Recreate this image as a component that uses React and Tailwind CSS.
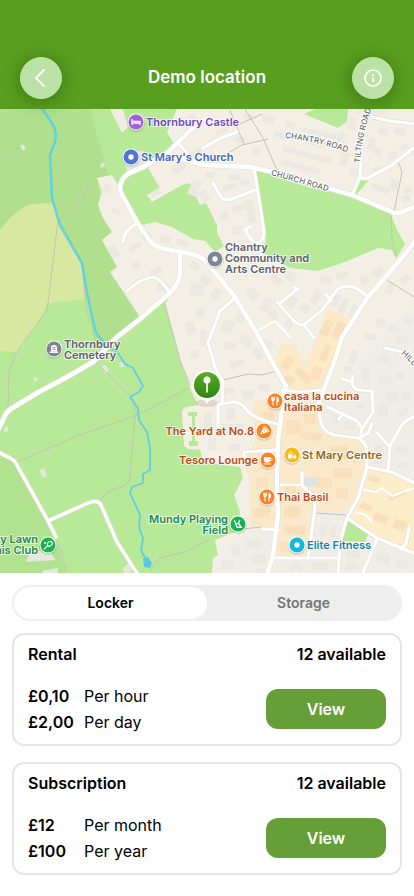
import { useState } from 'react';

const OFFERS = {
  locker: [
    {
      name: 'Rental',
      available: 12,
      prices: [
        { amount: '£0,10', period: 'Per hour' },
        { amount: '£2,00', period: 'Per day' },
      ],
    },
    {
      name: 'Subscription',
      available: 12,
      prices: [
        { amount: '£12', period: 'Per month' },
        { amount: '£100', period: 'Per year' },
      ],
    },
  ],
  storage: [
    {
      name: 'Rental',
      available: 4,
      prices: [{ amount: '£5,00', period: 'Per day' }],
    },
  ],
};

const TABS = [
  { id: 'locker', label: 'Locker' },
  { id: 'storage', label: 'Storage' },
];

// x, y, width, height, rotation
const BUILDINGS = [
  [104, 184, 7, 9, 10], [112, 208, 9, 6, 20], [110, 245, 8, 13, -30], [128, 244, 14, 6, -30],
  [142, 232, 9, 9, 30], [160, 236, 10, 7, 10], [176, 240, 12, 6, 20], [150, 268, 12, 6, -25],
  [132, 262, 8, 7, -30], [157, 284, 12, 8, 10], [172, 164, 14, 8, -25], [190, 150, 12, 7, -30],
  [190, 180, 9, 16, 25], [200, 190, 8, 12, -30], [151, 190, 10, 6, -30], [206, 172, 9, 6, 10],
  [186, 115, 10, 8, -25], [215, 128, 12, 6, -25], [235, 136, 10, 7, 15], [252, 148, 9, 7, 15],
  [244, 114, 9, 6, 20], [262, 116, 12, 7, 15], [285, 122, 10, 6, 15], [274, 132, 12, 6, 15],
  [287, 138, 44, 6, 15], [282, 152, 50, 6, 15], [280, 164, 40, 6, 15], [302, 131, 36, 5, 12],
  [334, 136, 14, 7, -70], [348, 118, 8, 12, 10], [340, 152, 8, 14, 15], [350, 168, 8, 8, 15],
  [368, 138, 7, 12, 15], [378, 128, 10, 7, 10], [394, 128, 12, 7, 10], [374, 148, 8, 7, 15],
  [372, 166, 10, 7, -30], [388, 152, 9, 7, -30], [400, 144, 8, 6, -30], [372, 186, 18, 6, 20],
  [390, 178, 8, 12, 10], [404, 186, 8, 8, 10], [402, 196, 8, 6, -20], [228, 174, 12, 6, 5],
  [222, 184, 14, 6, -20], [240, 180, 9, 6, 10], [232, 204, 16, 7, -20], [220, 212, 9, 8, -40],
  [246, 200, 8, 14, -10], [232, 226, 9, 9, 10], [248, 214, 8, 9, 10], [240, 240, 9, 6, 10],
  [190, 262, 10, 8, 30], [200, 275, 10, 10, 30], [190, 284, 14, 12, 10], [196, 308, 9, 9, 0],
  [212, 288, 8, 12, 40], [186, 322, 9, 12, -10], [200, 330, 6, 16, 0], [190, 350, 8, 8, 0],
  [222, 320, 12, 12, 15], [236, 314, 8, 9, 30], [224, 342, 12, 8, 0], [240, 336, 12, 10, 30],
  [230, 360, 14, 7, -10], [252, 350, 12, 8, 50], [262, 340, 10, 12, 30], [248, 288, 9, 12, -30],
  [262, 298, 10, 14, 30], [270, 276, 12, 8, 40], [286, 272, 10, 9, 40], [288, 296, 8, 12, 40],
  [300, 304, 10, 8, 40], [312, 290, 8, 14, 30], [320, 276, 12, 8, 10], [336, 272, 12, 7, -10],
  [340, 298, 7, 16, 25], [350, 304, 7, 14, 25], [333, 294, 6, 14, 25], [284, 320, 9, 8, 40],
  [270, 310, 8, 10, -30], [372, 268, 12, 8, -50], [360, 276, 9, 8, -30], [386, 282, 8, 12, 30],
  [400, 276, 10, 7, -50], [376, 318, 10, 9, -20], [388, 326, 12, 7, 30], [404, 318, 9, 7, 20],
  [364, 334, 12, 6, 0], [350, 350, 7, 14, 20], [378, 356, 12, 7, 10], [396, 336, 12, 7, 10],
  [344, 366, 8, 7, 0], [362, 368, 8, 14, 0], [378, 376, 14, 8, 10], [396, 372, 8, 7, 0],
  [386, 392, 12, 10, 0], [402, 392, 9, 8, 0], [378, 404, 10, 12, 0], [398, 408, 10, 7, -30],
  [346, 396, 8, 7, 20], [330, 414, 9, 9, 20], [344, 422, 12, 8, 10], [356, 402, 8, 7, 20],
  [204, 412, 8, 18, 0], [226, 408, 9, 12, 0], [222, 424, 12, 9, 0], [236, 424, 8, 8, 0],
  [222, 388, 12, 6, 0], [242, 390, 12, 9, 0], [258, 384, 12, 7, 10], [208, 438, 8, 12, 0],
  [228, 444, 12, 7, 0], [374, 444, 8, 12, 10], [396, 446, 12, 8, 20], [398, 462, 10, 7, 10],
  [374, 456, 9, 8, 10], [246, 540, 16, 8, 0], [252, 554, 14, 9, 0], [232, 545, 8, 10, 0],
  [222, 560, 12, 9, 0], [256, 568, 9, 5, 0], [320, 522, 7, 14, 10], [330, 525, 6, 12, 10],
  [322, 542, 12, 8, 0], [312, 562, 16, 8, 0], [290, 563, 12, 8, 0], [346, 548, 14, 10, 0],
  [346, 562, 10, 8, 0], [376, 554, 14, 9, 20], [396, 560, 12, 8, 20],
];

const SHOPS = [
  [322, 320, 9, 16, 25], [334, 322, 9, 18, 25], [322, 344, 7, 18, 20], [284, 356, 8, 14, 30],
  [294, 372, 18, 8, 40], [312, 366, 9, 14, 20], [284, 376, 10, 8, 40], [262, 412, 12, 10, 0],
  [286, 420, 14, 14, 0], [304, 414, 12, 10, 0], [300, 432, 22, 8, 10], [330, 446, 18, 14, 0],
  [334, 468, 18, 10, 0], [256, 478, 12, 10, 0], [254, 508, 16, 9, 0], [284, 486, 12, 8, 0],
  [284, 506, 16, 12, 0], [284, 526, 14, 8, 0], [318, 478, 14, 10, 0], [336, 488, 12, 10, 0],
  [298, 525, 8, 10, 0], [280, 542, 8, 10, 0], [368, 476, 12, 6, 15], [394, 520, 12, 10, 20],
  [374, 514, 14, 9, 20], [388, 492, 18, 6, -20], [360, 504, 12, 6, 25],
];

const WIDE_ROADS = [
  'M-4 434 L3 420 Q6 411 14 407 L37 393 L67 377 L93 362 L117 337 L140 319 L170 293 Q180 283 180 272 V254',
  'M195 126 L167 153 L143 167 L129 173 Q119 180 120 191 L137 222 L150 241 Q156 248 170 250 L192 254 Q204 257 210 266 L235 297 L255 330 L275 367 L286 386',
  'M286 386 Q282 394 282 410 L278 440 L277 482 L278 515 L273 555 L267 575',
  'M416 240 L402 258 L368 297 L342 337 L335 360 L327 381 L319 402',
  'M167 155 L205 165 L250 167 L273 172 L352 195 L390 211 Q396 215 402 212 L416 206',
];

const ROADS = [
  'M-2 452 L10 458 Q15 460 18 467 L48 521 L56 537',
  'M48 521 L88 503 Q98 499 101 505 L117 542 L138 575',
  'M282 390 L300 392 L320 390',
  'M320 400 V418 Q321 431 334 435 L358 438 Q367 443 367 452 V467 L358 498 L347 518 L340 542 L338 575',
  'M367 467 L392 472 L416 484',
  'M347 518 L377 538 L416 554',
  'M254 168 L260 205 L264 232 Q264 240 258 243 Q251 243 245 229 L251 227',
  'M213 183 L221 197 Q225 201 232 199 L255 190',
  'M362 138 L360 177 L352 195',
  'M360 178 H368 L392 165 L416 146',
  'M372 117 L390 121 L416 124',
  'M203 148 L219 139 L237 132',
  'M178 143 L187 153',
  'M136 224 Q124 230 123 242',
  'M127 291 Q140 279 153 277 Q160 278 170 293',
  'M235 298 L220 311 L208 343 L215 367 L223 382 L222 403',
  'M218 428 V405 L232 402 Q240 401 246 409 Q253 419 278 424',
  'M244 463 V452 L277 450',
  'M277 302 L295 322 Q300 326 305 324 L322 310 L337 290 Q346 283 358 289 L368 297',
  'M280 303 L298 289 L294 287',
  'M304 325 L314 338',
  'M326 294 L331 301',
  'M343 379 L352 382 L353 376 M352 382 Q353 390 360 390 L372 391 L373 412 L362 429 L360 438',
  'M327 407 L343 414 L357 421 L362 428 M343 414 L339 419',
  'M385 348 L403 352',
  'M377 433 L390 447 L388 470 M416 416 Q403 421 400 428 L390 446',
  'M372 424 L368 433 L360 438',
  'M302 472 V485 L313 496 Q316 502 314 515 L308 558',
  'M272 558 H338',
  'M377 539 L362 575',
  'M262 529 L278 530',
  'M409 528 L406 544 L401 549',
];

const ALLEYS = [
  'M257 331 L275 321 L290 337',
  'M364 490 L376 492 L382 488 L392 496 L402 492 L414 488',
  'M355 512 L366 515 L371 521',
  'M280 485 L302 485',
];

const PATHS = [
  'M0 155 H25', 'M89 181 Q88 195 79 204 Q70 212 58 220 L53 262 L47 311 L24 341 Q12 358 9 372 L8 408',
  'M60 225 L82 264 L85 296 L89 322', 'M97 363 L132 398 L137 415 L187 389', 'M17 462 L80 435 L137 415',
  'M135 415 L130 476 Q129 485 121 487 Q106 490 100 501', 'M56 537 L67 573',
  'M150 570 L160 558 L185 552 L208 540', 'M165 304 L180 360 L190 385',
  'M245 109 L263 138 L277 170', 'M228 153 L242 145 L268 139', 'M230 110 L244 144', 'M240 124 L262 114',
  'M398 161 L402 172 L394 212 M391 216 L392 240 L396 256', 'M384 278 L414 297',
  'M223 380 L248 374 L262 375 L277 371', 'M315 513 L346 515', 'M243 529 L262 527',
];

function Glyph({ kind }) {
  const line = { fill: 'none', stroke: '#fff', strokeWidth: 1.3, strokeLinecap: 'round', strokeLinejoin: 'round' };

  switch (kind) {
    case 'bed':
      return <path d="M-4 -2.5 V2.5 M-4 1.2 H4 M4 2.5 V-.5 H-1.5 M-2.5 -.8 h.2" {...line} />;
    case 'fork':
      return (
        <g {...line} strokeWidth="1.1">
          <path d="M-3.2 -4 V-1.5 Q-3.2 -.3 -2 -.3 Q-.7 -.3 -.7 -1.5 V-4 M-2 -4 V4" />
          <path d="M2 4 V-4 Q3.6 -2.6 3.4 .5 H2" fill="#fff" />
        </g>
      );
    case 'pizza':
      return (
        <>
          <path d="M-4 3.8 L-.8 -3.4 Q2.8 -2.6 3.8 1 Z" fill="#fff" />
          <path d="M-.2 -4.6 Q4.2 -3.4 4.8 .6" {...line} strokeWidth="1" />
          <circle cx="0" cy="-.8" r=".7" fill="#f57a1f" />
          <circle cx="-1.4" cy="1.8" r=".6" fill="#f57a1f" />
        </>
      );
    case 'cup':
      return (
        <>
          <path d="M-4 -3 H2.2 V.4 Q2 2.4 0 2.4 H-1.8 Q-4 2.4 -4 .4 Z" fill="#fff" />
          <path d="M2.4 -2 Q4.4 -2 4.2 -.6 Q4 .6 2.4 .6 M-4 3.9 H2.6" {...line} strokeWidth=".9" />
        </>
      );
    case 'bag':
      return (
        <>
          <path d="M-4 -.8 H.4 V3.6 H-4 Z M1 .8 H4.2 V3.6 H1 Z" fill="#fff" />
          <path d="M-3 -1 Q-2.8 -4 -1 -3.6 Q.4 -3 0 -1 M1.6 .6 Q2.6 -1.2 3.6 .6" {...line} strokeWidth=".9" />
        </>
      );
    case 'grave':
      return (
        <>
          <path d="M-3 2.2 V-1.2 Q-3 -4 0 -4 Q3 -4 3 -1.2 V2.2 Z M-4.2 2.6 H4.2 V3.9 H-4.2 Z" fill="#fff" />
          <path d="M-1.4 -1.4 H1.4 M-1.4 .4 H1.4" stroke="#7f8496" strokeWidth=".9" />
        </>
      );
    case 'swing':
      return <path d="M-3.4 -3.4 L-1 3.4 M-2.4 -.2 L.6 -.6 L3 3 M1.6 -3.6 L.4 -.6 M-1 3 L3.6 3.4" {...line} />;
    case 'tennis':
      return (
        <g {...line} strokeWidth="1.1">
          <ellipse cx="1.8" cy="-1.2" rx="2.7" ry="2.1" transform="rotate(-40 1.8 -1.2)" />
          <path d="M-.2 .6 L-3.8 3.8" />
          <path d="M-3.2 -2.2 h.2" strokeWidth="1.8" />
        </g>
      );
    default:
      return <circle r="2.7" fill="#fff" />;
  }
}

const PLACES = [
  { x: 136, y: 122, fill: '#a35ddb', color: '#7045c4', kind: 'bed', tx: 146, ty: 126, lines: ['Thornbury Castle'] },
  { x: 131, y: 157, fill: '#5173d6', color: '#4262c4', kind: 'dot', tx: 141, ty: 161, lines: ["St Mary's Church"] },
  { x: 215, y: 259, fill: '#7f8496', color: '#5d6070', kind: 'dot', tx: 225, ty: 251, lines: ['Chantry', 'Community and', 'Arts Centre'] },
  { x: 54, y: 349, fill: '#7f8496', color: '#5d6070', kind: 'grave', tx: 64, ty: 348, lines: ['Thornbury', 'Cemetery'] },
  { x: 275, y: 401, fill: '#f98222', color: '#b94a20', kind: 'fork', tx: 284, ty: 400, lines: ['casa la cucina', 'Italiana'] },
  { x: 264, y: 431, fill: '#f98222', color: '#b94a20', kind: 'pizza', tx: 254, ty: 435, anchor: 'end', lines: ['The Yard at No.8'] },
  { x: 268, y: 460, fill: '#f98222', color: '#b94a20', kind: 'cup', tx: 258, ty: 464, anchor: 'end', lines: ['Tesoro Lounge'] },
  { x: 292, y: 455, fill: '#fbb713', color: '#8a6a20', kind: 'bag', tx: 302, ty: 459, lines: ['St Mary Centre'] },
  { x: 267, y: 497, fill: '#f98222', color: '#b94a20', kind: 'fork', tx: 277, ty: 501, lines: ['Thai Basil'] },
  { x: 238, y: 524, fill: '#18b350', color: '#1d8a50', kind: 'swing', tx: 228, ty: 523, anchor: 'end', lines: ['Mundy Playing', 'Field'] },
  { x: 297, y: 545, fill: '#12b9de', color: '#0d82a6', kind: 'dot', tx: 307, ty: 549, lines: ['Elite Fitness'] },
  { x: 48, y: 545, fill: '#18b350', color: '#1d8a50', kind: 'tennis', tx: 38, ty: 543, anchor: 'end', lines: ['ry Lawn', 'nis Club'] },
];

function Place({ place }) {
  return (
    <g>
      <circle cx={place.x} cy={place.y + 1} r="9" fill="#000" opacity=".12" />
      <circle cx={place.x} cy={place.y} r="8.5" fill="#fff" opacity=".9" />
      <circle cx={place.x} cy={place.y} r="7.5" fill={place.fill} />
      <g transform={`translate(${place.x} ${place.y})`}>
        <Glyph kind={place.kind} />
      </g>
      <text
        className="text-[11px] font-semibold"
        fill={place.color}
        stroke="#fff"
        strokeOpacity=".7"
        strokeWidth="2"
        strokeLinejoin="round"
        paintOrder="stroke"
        textAnchor={place.anchor || 'start'}
      >
        {place.lines.map((line, i) => (
          <tspan key={line} x={place.tx} y={place.ty + i * 11}>{line}</tspan>
        ))}
      </text>
    </g>
  );
}

function Blocks({ items, fill }) {
  return (
    <g fill={fill}>
      {items.map(([x, y, w, h, r], i) => (
        <rect key={i} x={x} y={y} width={w} height={h} transform={`rotate(${r} ${x + w / 2} ${y + h / 2})`} />
      ))}
    </g>
  );
}

function Lines({ items, color, width }) {
  return (
    <g fill="none" stroke={color} strokeWidth={width} strokeLinecap="round" strokeLinejoin="round">
      {items.map((d) => <path key={d} d={d} />)}
    </g>
  );
}

function TownMap() {
  return (
    <svg
      viewBox="0 109 414 464"
      preserveAspectRatio="xMidYMid slice"
      className="block h-[464px] w-full"
      role="img"
      aria-label="Map of the area around the location"
    >
      <defs>
        <linearGradient id="pin" x1="0" y1="0" x2="0" y2="1">
          <stop offset="0" stopColor="#5bab2a" />
          <stop offset="1" stopColor="#2f8410" />
        </linearGradient>
        <path id="chantry-road" d="M285 138 Q316 141 352 154" />
        <path id="church-road" d="M271 175 Q300 183 336 194" />
        <path id="tilting-road" d="M360 163 Q362 134 373 104" />
        <path id="hill-street" d="M401 354 Q411 362 424 380" />
      </defs>

      <rect y="109" width="414" height="464" fill="#f4efe4" />
      <path d="M325 400 L414 300 V573 H212 L240 530 L280 440 Z" fill="#f0ede6" />

      {/* fields and parks */}
      <path
        d="M0 109 H177 L167 133 L175 145 L130 172 L120 188 L138 222 L180 255 V280 L165 304 L180 360 L192 393 L198 405 L187 407 Q182 408 182 414 L184 445 Q186 451 200 449 L203 462 L240 467 L243 478 L234 495 L240 512 L240 530 L215 540 L218 555 L213 558 L212 573 H0 Z"
        fill="#b8e998"
      />
      <path d="M0 109 H90 L108 175 L97 178 L103 218 L112 232 L102 240 L117 267 L110 272 L140 318 L95 350 L82 263 L0 300 Z" fill="#b0e08e" />
      <path d="M0 455 L15 460 L48 521 L66 573 H0 Z" fill="#b0e28f" />
      <path d="M0 230 Q18 207 32 204 L52 203 L60 225 L82 263 L85 299 L48 303 L33 330 L17 352 L0 351 Z" fill="#d8e8a1" />
      <path d="M110 109 H123 L128 127 L122 133 Z" fill="#f1ece3" />
      <path d="M122 156 L143 150 L150 167 L128 173 Z" fill="#e6e6e0" />
      <path
        d="M97 178 L112 175 L120 188 L138 222 L172 227 L188 238 L205 241 L216 252 L200 275 L170 293 L140 317 L110 272 L117 267 L102 240 L112 232 L103 218 L98 205 L102 192 Z"
        fill="#f4efe4"
      />
      <path
        d="M121 180 L148 168 L160 188 L147 195 L152 202 L182 185 L190 183 L200 205 L206 203 L217 225 V233 L224 246 L215 252 L205 241 L193 239 L172 227 L155 222 L138 226 L120 192 Z"
        fill="#b8e998"
      />
      <path
        d="M255 168 L352 197 L390 212 L397 230 L405 244 L396 259 L392 250 L378 248 L345 262 L318 271 L290 268 L262 252 L266 240 L262 205 Z"
        fill="#b8e998"
      />
      <path d="M304 114 L315 109 H348 L347 122 L338 128 Z M357 180 L368 181 L355 196 Z M347 520 L369 532 L365 542 L339 541 Z" fill="#b8e998" />
      <path d="M188 412 H197 V416 H195 V441 H198 V446 H189 V441 H192 V416 H188 Z" fill="#b8e998" />
      <path d="M100 164 l4 -2 l1 4 l-4 2 Z M20 146 l3 -2 l3 5 l-3 2 Z M39 470 l5 -2 l3 8 l-4 2 Z M102 366 l4 -1 l3 6 l-4 2 Z M119 363 l4 -1 l2 4 l-4 2 Z M33 379 l3 -2 l2 3 l-3 2 Z M4 428 l4 -2 v5 l-4 1 Z M123 568 l6 -5 l4 5 l-3 5 h-6 Z M30 550 l20 2 l6 8 l-30 2 Z M42 571 l16 -3 v5 h-16 Z" fill="#e5e8dc" />

      {/* shopping streets */}
      <path d="M328 308 L348 317 L350 327 L338 350 L332 373 L320 393 L288 388 L275 360 L283 343 L295 345 L305 363 L317 340 Z" fill="#fbe9c8" />
      <path
        d="M253 402 L285 392 L320 400 L322 425 L340 437 L360 438 L366 450 L364 470 L350 510 L315 512 L307 557 H272 L277 530 L250 525 V480 L243 463 L255 442 Z"
        fill="#fae8cb"
      />
      <path d="M367 468 L414 480 V553 L380 540 L347 518 Z" fill="#fcecca" />

      <Blocks items={BUILDINGS} fill="#ebe8e2" />
      <Blocks items={SHOPS} fill="#f9e0bc" />
      <rect x="304" y="477" width="14" height="9" fill="#dfe3e6" />

      <Lines items={PATHS} color="#c5c2b8" width={1} />

      {/* stream and pond */}
      <path
        d="M41 107 L52 123 Q57 130 55 142 L50 155 L52 198 L60 225 L82 263 L87 293 L95 330 Q100 342 118 353"
        fill="none"
        stroke="#62d2dc"
        strokeWidth="2.5"
        strokeLinejoin="round"
      />
      <path
        d="M118 353 L125 364 L133 368 L143 386 L139 392 L130 397 L138 408 L139 420 L147 432 L150 448 V470 L143 474 V483 L132 487 L130 493 L140 515 L139 527 L143 538 L141 550 L146 560"
        fill="none"
        stroke="#62cfe0"
        strokeWidth="1.8"
        strokeLinejoin="round"
      />
      <path d="M143 559 L148 557 L152 563 L150 568 L144 567 Z" fill="#5cc8e8" />

      <Lines items={ALLEYS} color="#ffffff" width={2} />
      <Lines items={ROADS} color="#e3e0da" width={4.4} />
      <Lines items={WIDE_ROADS} color="#e3e0da" width={5.6} />
      <Lines items={ROADS} color="#ffffff" width={3.2} />
      <Lines items={WIDE_ROADS} color="#ffffff" width={4.4} />

      <g className="text-[8px] font-medium" fill="#6b6b6b" stroke="#fff" strokeWidth="2" paintOrder="stroke">
        <text><textPath href="#chantry-road">CHANTRY ROAD</textPath></text>
        <text><textPath href="#church-road">CHURCH ROAD</textPath></text>
        <text><textPath href="#tilting-road">TILTING ROAD</textPath></text>
        <text><textPath href="#hill-street">HILL</textPath></text>
      </g>

      {PLACES.map((place) => <Place key={place.lines[0]} place={place} />)}

      {/* the location itself */}
      <ellipse cx="207" cy="403" rx="11" ry="4" fill="#8a4a3a" opacity=".15" />
      <path d="M207 370 A15 15 0 0 1 213 398.700 Q209 400 207 404 Q205 400 201 398.700 A15 15 0 0 1 207 370 Z" fill="#fff" />
      <circle cx="207" cy="385" r="13" fill="url(#pin)" />
      <circle cx="207" cy="380" r="3.500" fill="#fff" />
      <path d="M207 382 V392" stroke="#fff" strokeWidth="1.600" strokeLinecap="round" />
    </svg>
  );
}

function RoundButton({ label, children }) {
  return (
    <button
      type="button"
      aria-label={label}
      className="flex size-[42px] items-center justify-center rounded-full border border-[#b4eb93] bg-[#bbe1a6] text-white shadow-[0_2px_20px_rgba(0,0,0,0.3)]"
    >
      {children}
    </button>
  );
}

function OfferCard({ offer }) {
  return (
    <section className="rounded-xl border-2 border-[#e5e5e5] px-3.5 pt-[7px] pb-[9px]">
      <div className="flex items-center justify-between font-semibold">
        <h2>{offer.name}</h2>
        <p>{offer.available} available</p>
      </div>
      <div className="mt-[17px] flex items-center justify-between">
        <dl className="leading-[26px]">
          {offer.prices.map((price) => (
            <div key={price.period} className="flex">
              <dt className="w-14 font-semibold">{price.amount}</dt>
              <dd>{price.period}</dd>
            </div>
          ))}
        </dl>
        <button type="button" className="h-10 w-[120px] rounded-xl bg-[#669f38] font-semibold text-white">
          View
        </button>
      </div>
    </section>
  );
}

export default function App() {
  const [activeTab, setActiveTab] = useState('locker');

  return (
    <div className="min-h-screen bg-white font-['Inter',sans-serif] text-base text-black">
      <header className="relative z-10 flex items-center justify-between bg-[#589f1f] px-5 pt-[57px] pb-2.5">
        <RoundButton label="Back">
          <svg width="24" height="24" viewBox="0 0 24 24" fill="none" stroke="currentColor" strokeWidth="2" strokeLinecap="round" strokeLinejoin="round">
            <path d="M15 4 L7 12 L15 20" />
          </svg>
        </RoundButton>
        <h1 className="text-[17px] font-semibold text-white">Demo location</h1>
        <RoundButton label="Information">
          <svg width="20" height="20" viewBox="0 0 20 20" fill="none" stroke="currentColor" strokeWidth="1.7" strokeLinecap="round">
            <circle cx="10" cy="10" r="8" />
            <path d="M10 10.200 V13.200 M10 7 V7.100" strokeWidth="2" />
          </svg>
        </RoundButton>
      </header>

      <TownMap />

      <main className="px-3 pt-3 pb-5">
        <div role="tablist" className="flex rounded-full bg-[#eeeeee] p-0.5">
          {TABS.map((tab) => (
            <button
              key={tab.id}
              type="button"
              role="tab"
              aria-selected={activeTab === tab.id}
              onClick={() => setActiveTab(tab.id)}
              className={
                activeTab === tab.id
                  ? 'h-8 flex-1 rounded-full bg-white text-sm font-semibold text-black'
                  : 'h-8 flex-1 rounded-full text-sm font-semibold text-[#757575]'
              }
            >
              {tab.label}
            </button>
          ))}
        </div>

        <div className="mt-3 flex flex-col gap-4">
          {OFFERS[activeTab].map((offer) => (
            <OfferCard key={offer.name} offer={offer} />
          ))}
        </div>
      </main>
    </div>
  );
}
